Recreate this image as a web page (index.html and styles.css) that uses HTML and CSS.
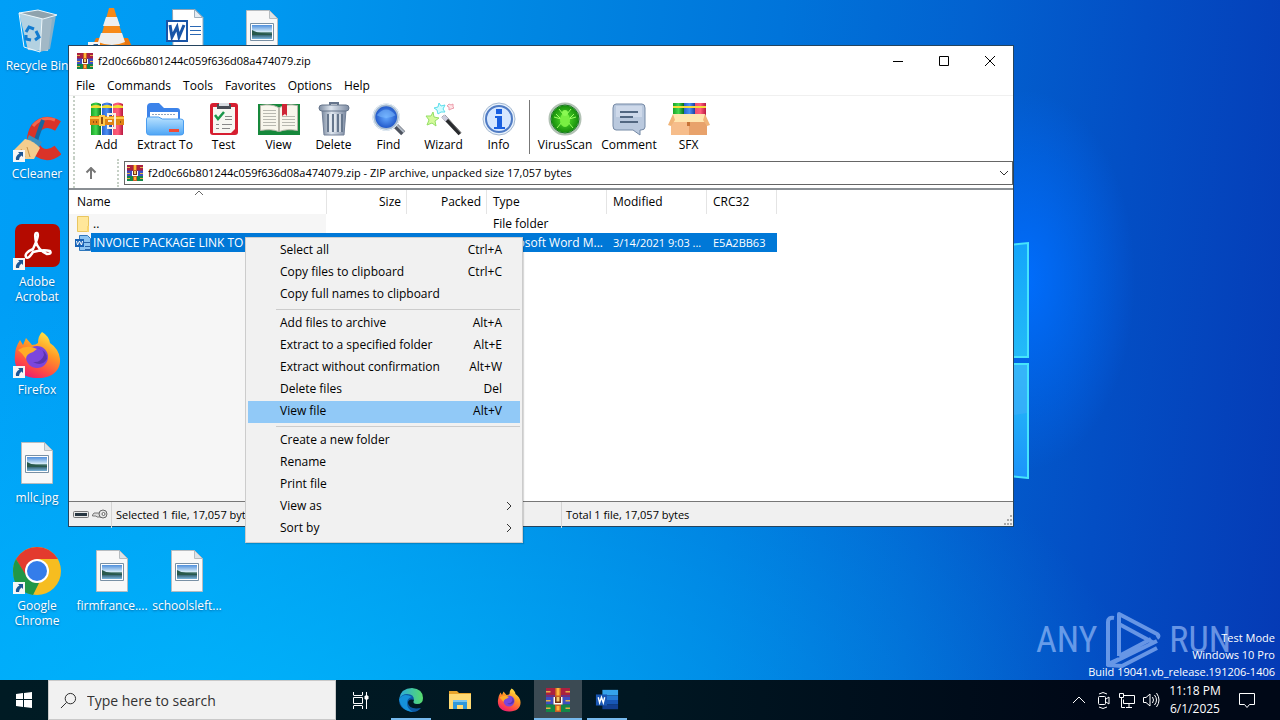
FILE: index.html
```html
<!DOCTYPE html>
<html lang="en">
<head>
<meta charset="utf-8">
<title>f2d0c66b801244c059f636d08a474079.zip</title>
<link rel="stylesheet" href="styles.css">
</head>
<body>
<svg class="defs" aria-hidden="true">
  <defs>
    <linearGradient id="gRed" x1="0" x2="1"><stop offset="0" stop-color="#f0506e"/><stop offset=".5" stop-color="#ff5c7c"/><stop offset="1" stop-color="#b81840"/></linearGradient>
    <linearGradient id="gBlue" x1="0" x2="1"><stop offset="0" stop-color="#2a62d0"/><stop offset=".5" stop-color="#4c90f4"/><stop offset="1" stop-color="#1a40a0"/></linearGradient>
    <linearGradient id="gGreen" x1="0" x2="1"><stop offset="0" stop-color="#18a428"/><stop offset=".5" stop-color="#44d850"/><stop offset="1" stop-color="#087018"/></linearGradient>
    <linearGradient id="gFolder" x1="0" y1="0" x2="0" y2="1"><stop offset="0" stop-color="#b9e2ff"/><stop offset="1" stop-color="#4fa6f5"/></linearGradient>
    <linearGradient id="gSteel" x1="0" x2="1"><stop offset="0" stop-color="#7c8ba0"/><stop offset=".4" stop-color="#dfe6ef"/><stop offset="1" stop-color="#7d8ba2"/></linearGradient>
    <linearGradient id="gSky" x1="0" y1="0" x2="0" y2="1"><stop offset="0" stop-color="#4f8fdc"/><stop offset=".5" stop-color="#d9edf8"/><stop offset=".55" stop-color="#3e6f63"/><stop offset=".75" stop-color="#3f6f80"/><stop offset="1" stop-color="#7ab4dd"/></linearGradient>
    <linearGradient id="gFox" x1=".8" y1="0" x2=".3" y2="1"><stop offset="0" stop-color="#fff04a"/><stop offset=".4" stop-color="#ff9a24"/><stop offset=".75" stop-color="#ff4b45"/><stop offset="1" stop-color="#ec1c70"/></linearGradient>
    <linearGradient id="gEdge" x1="0" y1="0" x2="1" y2="0"><stop offset="0" stop-color="#2aa8e0"/><stop offset="1" stop-color="#57dc6c"/></linearGradient>
    <linearGradient id="gPane" x1="0" y1="0" x2="0" y2="1"><stop offset="0" stop-color="#14a5fa"/><stop offset=".55" stop-color="#25bdf8"/><stop offset="1" stop-color="#1c93fa"/></linearGradient>
    <radialGradient id="gLens"><stop offset="0" stop-color="#66aaff"/><stop offset="1" stop-color="#1a50c4"/></radialGradient>
    <radialGradient id="gScan"><stop offset="0" stop-color="#58e82c"/><stop offset="1" stop-color="#108408"/></radialGradient>
  </defs>
  <symbol id="rar" viewBox="0 0 16 16">
    <path fill="#aa2040" d="M0 0h16v5H0z"/><path fill="#3d4ec0" d="M0 5h16v6H0z"/><path fill="#138648" d="M0 11h16v5H0z"/>
    <path fill="#742c80" d="M0 5h16v1H0z"/><path fill="#e5ad48" d="M0 2h3v1H0zM13 2h3v1h-3zM0 8h3v1H0zM13 8h3v1h-3zM0 13h3v1H0zM13 13h3v1h-3z"/>
    <path fill="#c95d24" d="M6 0h4v16H6z"/><path fill="#ffb53a" d="M7 0h2v5H7zM7 12h2v3H7z"/>
    <path fill="#743018" d="M5 6h6v5H5z"/><path fill="#fff" d="M5 6h1v4h4V6h1v5H5z"/><path fill="#f3c767" d="M7 6h2v3H7z"/>
  </symbol>
  <symbol id="books" viewBox="0 0 34 34">
    <path fill="url(#gGreen)" d="M1 2q5-3 10 0v31H1z"/><path fill="url(#gBlue)" d="M12 2q5-3 10 0v31H12z"/><path fill="url(#gRed)" d="M23 2q5-3 10 0v31H23z"/>
    <path fill="#f2dd33" d="M1 4q5-2 10 0v2H1zM12 4q5-2 10 0v2H12zM23 4q5-2 10 0v2H23z"/>
    <path fill="#df8415" d="M0 14h34v9H0z"/><path fill="#ffc94b" d="M0 15h34v2H0zM9 13h6v11H9z"/><path fill="#8d4e10" d="M3 19h1v2H3zM6 19h1v2H6zM11 15h2v7h-2zM30 19h1v2h-1z"/>
    <path fill="none" stroke="#f4eee2" stroke-width="2" d="M18 15v-3h7v14h-7v-3M18 19h4"/>
  </symbol>
  <symbol id="photo" viewBox="0 0 48 48">
    <path fill="#f8f8f8" stroke="#b7bcc0" d="M8.500 3.500H31L39.500 12v32.500h-31z"/><path fill="#dce3e8" stroke="#b7bcc0" d="M31.500 3.500v8h8z"/>
    <path fill="#fff" stroke="#7890a5" d="M12.500 16.500h23v17h-23z"/><path fill="url(#gSky)" d="M14 18h20v14H14z"/><path fill="#28594c" d="M14 23q5 3 9 3l11 1v1H14z"/>
  </symbol>
  <symbol id="shortcut" viewBox="0 0 12 12"><path fill="#f6f6f6" d="M0 0h12v12H0z"/><path fill="#1d5795" d="M5 2h5v5L8.500 5.500Q6 7 6 10H3q-1-4 3.500-6.500z"/></symbol>
  <symbol id="fox" viewBox="0 0 48 48">
    <path fill="url(#gFox)" d="M29 1q7 4 8 11 9 6 10 16c1 12-9 19-21 19C10 48 0 38 2 24q0-7 5-15l3 5 3-7 6 7q4 0 6-2 0-7 4-11z"/>
    <circle cx="24" cy="26" r="11" fill="#7b46dd"/><path fill="#ffac27" d="M5 19q9-6 19-1l-4 3q-7 2-7 7-4-6-8-9z"/><path fill="#5c34b0" d="M24 17q7 1 7 7-3 8-11 7 9 5 14-3 1-8-10-11z"/>
  </symbol>
  <symbol id="word" viewBox="0 0 26 24">
    <path fill="#35a3ec" d="M8 1h17v6H8z"/><path fill="#2478d4" d="M8 7h17v5H8z"/><path fill="#1857b6" d="M8 12h17v5H8z"/><path fill="#123f91" d="M8 17h17v5H8z"/><path fill="#1956b3" d="M1 6h12v12H1z"/>
    <path fill="none" stroke="#fff" stroke-width="1.500" d="M3.500 9l1.500 6 2-6 2 6 1.500-6"/>
  </symbol>
</svg>

<main class="desktop">
  <svg class="wall-panes" viewBox="0 0 20 240" aria-hidden="true">
    <path fill="url(#gPane)" stroke="#46e4fb" stroke-width="2" d="M-4 6L14 4v114H-4zM-4 125h18v114l-18-2z"/>
    <path fill="#46adfa" opacity=".5" d="M0 176l13-2V126H0z"/>
  </svg>

  <div class="icons">
    <button class="shortcut c1 r1"><svg viewBox="0 0 48 48"><path fill="#c7d6df" opacity=".9" d="M6 6l33 6-4 32-20-1z"/><path fill="#9fb4c1" opacity=".85" d="M43 8l-6 34-10 3 2-33z"/><path fill="#8fa3ae" d="M6 6l19-3 19 5-14 4z"/><path fill="none" stroke="#eef7fb" d="M6 6l19-3 19 5-14 4zM6 6l5 34 16 5 2-33"/><path fill="none" stroke="#117bd0" stroke-width="3" d="M13 25l3-5 5 2M23 24l3 6-4 3M18 33l-5-1v-4"/></svg><span>Recycle Bin</span></button>
    <button class="shortcut c2 r1" aria-label="VLC"><svg viewBox="0 0 48 48"><path fill="#e87611" d="M8 31h32l6 13H2z"/><path fill="#f78917" d="M21 1h5l11 36q-13 7-26 0z"/><path fill="#eee" d="M18 10h11l3 9H15zM13 26h21l3 9q-13 6-27 0z"/><use href="#shortcut" y="35" width="12" height="12"/></svg></button>
    <button class="shortcut c3 r1" aria-label="Document"><svg viewBox="0 0 48 48"><path fill="#fff" stroke="#8ea4b6" d="M9.500 2.500H32l8 8v35h-30z"/><path fill="#e5ebf2" stroke="#9eafbd" d="M31.500 2.500v8h8z"/><path stroke="#2b68b4" d="M27 19.500h11M27 23.500h11M27 27.500h11"/><path fill="#fff" stroke="#1955a7" stroke-width="2" d="M4 14h20v20H4z"/><path fill="none" stroke="#1955a7" stroke-width="3" d="M7 18l2 12 5-10 2 10 5-12"/></svg></button>
    <button class="shortcut c4 r1" aria-label="Picture"><svg><use href="#photo"/></svg></button>
    <button class="shortcut c1 r2"><svg viewBox="0 0 48 48"><path fill="none" stroke="#da3328" stroke-width="11" d="M45 11Q32 3 23 13q-8 14 3 24 9 6 19-2"/><path fill="none" stroke="#f2674d" stroke-width="3" d="M42 5Q29 0 20 11"/><path stroke="#19669e" stroke-width="4" d="M30 5l-7 20"/><path fill="#3d91be" d="M16 20l13 7-4 7-11-9z"/><path fill="#f3cd8e" d="M12 24q9 2 15 9l-6 11H9L1 35z"/><path stroke="#c99043" fill="none" d="M8 34l4 8M14 32l3 10"/><use href="#shortcut" y="35" width="12" height="12"/></svg><span>CCleaner</span></button>
    <button class="shortcut c1 r3"><svg viewBox="0 0 48 48"><rect x="2" y="1" width="45" height="43" rx="7" fill="#b40a00"/><path fill="none" stroke="#fff" stroke-width="2.500" d="M13 34q-2-4 7-8 7-15 4-16t-1 9q2 8 11 12 5 0 3-3-7-2-17 1-5 8-7 5z"/><use href="#shortcut" y="35" width="12" height="12"/></svg><span>Adobe Acrobat</span></button>
    <button class="shortcut c1 r4"><svg viewBox="0 0 48 48"><use href="#fox" width="48" height="48"/><use href="#shortcut" y="35" width="12" height="12"/></svg><span>Firefox</span></button>
    <button class="shortcut c1 r5"><svg><use href="#photo"/></svg><span>mllc.jpg</span></button>
    <button class="shortcut c1 r6"><svg viewBox="0 0 48 48"><circle cx="24" cy="24" r="24" fill="#f6bd20"/><path fill="#e33b2e" d="M3 12Q11 0 24 0t21 12H24l-11 18z"/><path fill="#219747" d="M3 12l11 18q4 6 12 6l-6 12Q0 44 0 24q0-7 3-12z"/><circle cx="24" cy="24" r="12" fill="#fff"/><circle cx="24" cy="24" r="10" fill="#347dea"/><use href="#shortcut" y="35" width="12" height="12"/></svg><span>Google Chrome</span></button>
    <button class="shortcut c2 r6"><svg><use href="#photo"/></svg><span>firmfrance....</span></button>
    <button class="shortcut c3 r6"><svg><use href="#photo"/></svg><span>schoolsleft...</span></button>
  </div>

  <div class="brand" aria-label="ANY RUN">
    <span>ANY</span>
    <svg viewBox="0 0 56 60" aria-hidden="true"><g fill="none" stroke="#a9c9ff" stroke-width="4" stroke-linejoin="round"><path d="M9 8q-6-1-6 4v42l11-5"/><path d="M14 46V4l38 20q3 2 0 4"/><path d="M14 14l35 19"/><path d="M52 31L3 55l14 1 35-18M14 46l32-17"/></g></svg>
    <span>RUN</span>
  </div>
  <p class="build">Test Mode<br>Windows 10 Pro<br>Build 19041.vb_release.191206-1406</p>

  <section class="window">
    <header class="titlebar">
      <svg class="mini"><use href="#rar"/></svg>
      <h1>f2d0c66b801244c059f636d08a474079.zip</h1>
      <div class="controls">
        <button aria-label="Minimize"><svg viewBox="0 0 12 12"><path d="M1 6.500h10"/></svg></button>
        <button aria-label="Maximize"><svg viewBox="0 0 12 12"><path d="M1.500 1.500h9v9h-9z"/></svg></button>
        <button aria-label="Close"><svg viewBox="0 0 12 12"><path d="M1 1l10 10M11 1L1 11"/></svg></button>
      </div>
    </header>
    <nav class="menubar"><button>File</button><button>Commands</button><button>Tools</button><button>Favorites</button><button>Options</button><button>Help</button></nav>
    <div class="toolbar">
      <button><svg viewBox="0 0 34 34"><use href="#books"/></svg>Add</button>
      <button class="mid"><svg class="wide" viewBox="0 0 38 34"><path fill="#3c83ea" d="M1 5q0-4 4-4h8l5 5h13q3 0 3 3v15H1z"/><path fill="#fff" d="M4 10h28v8H4z"/><path stroke="#92a6bf" stroke-dasharray="2 1" d="M6 12.500h24"/><path fill="url(#gFolder)" stroke="#4a9df0" d="M.5 17q0-2 2-2h10l4 2h18q3 0 3 2v12q0 2-3 2h-31q-3 0-3-3z"/><path fill="#ef4b36" d="M23 27h10v3H23z"/></svg>Extract To</button>
      <button><svg viewBox="0 0 34 34"><rect x="3" y="1" width="28" height="32" rx="3" fill="#d61e30"/><path fill="#f7f7f2" d="M6 5h22v22l-4 4H6z"/><path fill="#484c54" d="M10 2h14v5H10z"/><path fill="#d9dde2" d="M12 1h10v3H12z"/><path fill="none" stroke="#1a974a" stroke-width="2.500" d="M8 13l3 4 6-7"/><path stroke="#888" d="M18 14.500h7M18 17.500h7M15 22.500h10M15 26.500h8M9 22.500h3M9 26.500h3"/></svg>Test</button>
      <button><svg class="book" viewBox="0 0 44 34"><path fill="#16883b" d="M1 2h42v31H1z"/><path fill="#f8f6ec" stroke="#b7b5a9" d="M3.500 3.500q11-2 18 2v24q-7-3-18-1zM40.500 3.500q-11-2-18 2v24q7-3 18-1z"/><path stroke="#b8b8b0" d="M6 8.500h13M6 11.500h13M6 14.500h13M6 17.500h13M6 20.500h13M6 23.500h13M25 14.500h13M25 17.500h13M25 20.500h13M25 23.500h13"/><path fill="#ce2536" d="M25 2h5v12l-2-2-3 2z"/></svg>View</button>
      <button><svg viewBox="0 0 34 34"><path fill="url(#gSteel)" stroke="#728097" d="M5 8h24l-2 25H7z"/><path stroke="#66768c" stroke-width="2" d="M11 12v18M16 12v18M21 12v18M25 12v18"/><path stroke="#f7fafc" d="M13 12v18M18 12v18M23 12v18"/><rect x="2" y="3" width="30" height="6" rx="3" fill="url(#gSteel)" stroke="#65748a"/><path fill="none" stroke="#66758c" stroke-width="2" d="M13 3V1h8v2"/></svg>Delete</button>
      <button><svg viewBox="0 0 36 34"><path stroke="#4d535f" stroke-width="6" d="M24 23l9 9"/><path stroke="#b3bbc6" stroke-width="2" d="M25 22l9 9"/><circle cx="15" cy="15" r="13" fill="url(#gLens)" stroke="#a9bdd2" stroke-width="3"/><circle cx="15" cy="15" r="14" fill="none" stroke="#eef6fc"/><path fill="#82bfff" opacity=".5" d="M5 13q10-12 20 0-10 6-20 0z"/></svg>Find</button>
      <button><svg class="wide" viewBox="0 0 38 34"><path stroke="#292b2e" stroke-width="4" d="M18 14l17 18"/><path stroke="#777" d="M20 13l16 18"/><path stroke="#ccd" stroke-width="4" d="M18 14l4 4"/><path fill="#d4fa9c" stroke="#94df65" d="M8 10l1 5 5 1-4 3 1 5-4-3-5 2 2-5-3-4h5z"/><path fill="#d1fcff" stroke="#5bddeb" d="M14 1l2 3 4-1-2 4 2 3h-4l-3 2-1-4-3-2 4-1z"/><path fill="#ffe6e8" stroke="#ec9cab" d="M24 2l2 1 2-1v3l1 1-3 1-2 1v-3l-2-1z"/></svg>Wizard</button>
      <button><svg viewBox="0 0 34 34"><circle cx="17" cy="17" r="16" fill="#e8f1fb" stroke="#a5b9d1"/><circle cx="17" cy="17" r="13" fill="#d6e7ff" stroke="#4f7bc4" stroke-width="2"/><path fill="#195fe0" d="M13 14h7v11h3v2H12v-2h3v-9h-2zM14 7h6v5h-6z"/></svg>Info</button>
      <i class="rule"></i>
      <button class="long"><svg viewBox="0 0 34 34"><circle cx="17" cy="17" r="15" fill="url(#gScan)" stroke="#b2c2b4" stroke-width="3"/><circle cx="17" cy="17" r="14" fill="none" stroke="#137a1a"/><path fill="none" stroke="#a0ff68" d="M11 7l4 5M23 7l-4 5M6 15l7 2M28 15l-7 2M9 26l5-6M25 26l-5-6M13 17l-5-5M21 17l5-5"/><ellipse cx="17" cy="18" rx="5" ry="7" fill="#79ef42"/><circle cx="17" cy="11" r="3" fill="#8af952"/></svg>VirusScan</button>
      <button class="long"><svg viewBox="0 0 34 34"><path fill="#bac9de" stroke="#7589a5" d="M4 2h26q3 0 3 4v19q0 3-4 3h-1v5l-7-5H4q-3 0-3-4V6q0-4 3-4z"/><path fill="#dce5f2" d="M4 4h26v11H4z" opacity=".6"/><path stroke="#526781" stroke-width="2" d="M8 10h18M8 15h13M8 20h18"/></svg>Comment</button>
      <button><svg class="book" viewBox="0 0 44 34"><path fill="url(#gGreen)" d="M6 1h11v14H6z"/><path fill="url(#gBlue)" d="M17 1h11v14H17z"/><path fill="url(#gRed)" d="M28 1h11v14H28z"/><path fill="#f7dc39" d="M6 4h11v2H6zM17 4h11v2H17zM28 4h11v2H28z"/><path fill="#e8a26b" d="M4 18h36v15H4z"/><path fill="#f6bd8b" d="M4 18h18v15H4z"/><path fill="#ffe6b0" d="M6 12h32l2 8H4z"/><path fill="#f0b478" d="M6 12L1 23l3 1 4-6zM38 12l5 11-3 1-4-6z"/><path fill="#c77438" d="M20 20h3v4h-3z"/></svg>SFX</button>
    </div>
    <div class="address">
      <button class="up" aria-label="Up one level"><svg viewBox="0 0 12 12"><path d="M6 12V1M1.500 5.500L6 1l4.500 4.500"/></svg></button>
      <div class="path">
        <svg class="mini"><use href="#rar"/></svg>
        <input aria-label="Path" value="f2d0c66b801244c059f636d08a474079.zip - ZIP archive, unpacked size 17,057 bytes">
        <button aria-label="Show paths"><svg viewBox="0 0 12 12"><path d="M2 4l4 4 4-4"/></svg></button>
      </div>
    </div>
    <div class="list">
      <table>
        <colgroup><col class="w-name"><col class="w-num"><col class="w-num"><col class="w-type"><col class="w-date"><col class="w-crc"></colgroup>
        <thead><tr><th>Name<svg class="sort" viewBox="0 0 10 6"><path d="M1 5l4-4 4 4"/></svg></th><th class="num">Size</th><th class="num">Packed</th><th>Type</th><th>Modified</th><th>CRC32</th></tr></thead>
        <tbody>
          <tr><td class="file"><div><svg class="mini" viewBox="0 0 16 16"><path fill="#ffe79a" stroke="#e9c660" d="M2.500.5h11v15h-11z"/><path fill="#f9d56e" d="M12 10h2v6h-2z"/></svg><span>..</span></div></td><td></td><td></td><td>File folder</td><td></td><td></td></tr>
          <tr class="selected"><td class="file"><div><svg class="mini" viewBox="0 0 16 16"><path fill="#8cc4f2" stroke="#2e77bc" d="M4.500.5h8l3 3v12h-11z"/><path stroke="#2763a9" d="M9 7.500h6M10 11.500h5M10 14.500h5"/><path fill="#1762b6" d="M0 4h9v8H0z"/><path fill="none" stroke="#fff" d="M1.500 6l1 4 2-4 2 4 1-4"/></svg><span>INVOICE PACKAGE LINK TO D</span></div></td><td></td><td></td><td>Microsoft Word M...</td><td class="data">3/14/2021 9:03 ...</td><td class="data">E5A2BB63</td></tr>
        </tbody>
      </table>
    </div>
    <footer class="status">
      <div class="locks"><svg viewBox="0 0 16 12"><rect x=".5" y="2.500" width="15" height="6" rx="1" fill="#e8e8e8" stroke="#777"/><path fill="#263641" d="M2 4h12v3H2z"/></svg><svg viewBox="0 0 16 12"><path fill="#ddd" stroke="#777" d="M8 4H2L.5 6v1H4l1 1h5"/><circle cx="11" cy="5" r="4" fill="#e6e6e6" stroke="#666"/><circle cx="11.500" cy="5" r="1.500" fill="#fff" stroke="#666"/></svg></div>
      <span>Selected 1 file, 17,057 bytes</span><span>Total 1 file, 17,057 bytes</span>
      <svg class="grip" viewBox="0 0 10 10"><path fill="#a8a8a8" d="M8 0h2v2H8zM5 4h2v2H5zM8 4h2v2H8zM2 8h2v2H2zM5 8h2v2H5zM8 8h2v2H8z"/></svg>
    </footer>
  </section>

  <div class="context" role="menu">
    <button role="menuitem">Select all<span>Ctrl+A</span></button>
    <button role="menuitem">Copy files to clipboard<span>Ctrl+C</span></button>
    <button role="menuitem">Copy full names to clipboard</button>
    <hr>
    <button role="menuitem">Add files to archive<span>Alt+A</span></button>
    <button role="menuitem">Extract to a specified folder<span>Alt+E</span></button>
    <button role="menuitem">Extract without confirmation<span>Alt+W</span></button>
    <button role="menuitem">Delete files<span>Del</span></button>
    <button role="menuitem" class="active">View file<span>Alt+V</span></button>
    <hr>
    <button role="menuitem">Create a new folder</button>
    <button role="menuitem">Rename</button>
    <button role="menuitem">Print file</button>
    <button role="menuitem" class="sub">View as<svg viewBox="0 0 6 10"><path d="M1 1l4 4-4 4"/></svg></button>
    <button role="menuitem" class="sub">Sort by<svg viewBox="0 0 6 10"><path d="M1 1l4 4-4 4"/></svg></button>
  </div>
</main>

<footer class="taskbar">
  <button class="start" aria-label="Start"><svg viewBox="0 0 16 16"><path fill="#fff" d="M0 2l7-1v6H0zM8 1l8-1v7H8zM0 8h7v7l-7-1zM8 8h8v8l-8-1z"/></svg></button>
  <label class="search"><svg viewBox="0 0 18 18"><circle cx="11" cy="7" r="5.500"/><path d="M7 11l-6 6"/></svg><input type="text" placeholder="Type here to search" aria-label="Search"></label>
  <button class="view" aria-label="Task view"><svg class="line" viewBox="0 0 18 18"><path d="M2.500 1v3M11.500 1v3M2.500 4.500h9M2.500 6.500h9v6h-9zM2.500 14.500h9M2.500 15v3M11.500 15v3M15.500 1v17"/><path fill="#fff" d="M14 5h3v3h-3z"/></svg></button>
  <div class="apps">
    <button class="open" aria-label="Edge"><svg viewBox="0 0 24 24"><path fill="#0c59a4" d="M0 12q2-7 9-7 7 1 7 7-7-2-7 3 1 7 13 5-5 6-13 3Q0 20 0 12z"/><path fill="url(#gEdge)" d="M0 11Q2 0 13 0q11 1 11 10 0 6-6 6-5 0-3-4 0-6-7-6-5 0-8 5z"/><path fill="#1591da" d="M0 11q2 12 14 13-6-3-6-9 0-5 5-6-8-5-13 2z"/></svg></button>
    <button aria-label="File Explorer"><svg viewBox="0 0 24 24"><path fill="#e8a52b" d="M1 3h8l2 2h12v3H1z"/><path fill="#ffda73" d="M1 6h22v15H1z"/><path fill="#2f98da" d="M5 12h14v9h-4v-4H9v4H5z"/><path fill="#78c4ef" d="M5 12h14v2H5z"/></svg></button>
    <button aria-label="Firefox"><svg><use href="#fox"/></svg></button>
    <button class="open current" aria-label="WinRAR"><svg><use href="#rar"/></svg></button>
    <button class="open" aria-label="Word"><svg><use href="#word"/></svg></button>
  </div>
  <div class="tray">
    <button aria-label="Hidden icons"><svg class="line" viewBox="0 0 18 18"><path d="M3 12l6-6 6 6"/></svg></button>
    <button aria-label="Meet now"><svg class="line" viewBox="0 0 18 18"><rect x="4.500" y="5.500" width="7" height="8" rx="1"/><path d="M12 8l3-2v7l-3-2M5 3q4-3 8 0M5 16q4 3 8 0"/></svg></button>
    <button aria-label="Network"><svg class="line" viewBox="0 0 18 18"><path d="M6 4.500h10.500v8H5.500v-4M8 16.500h6M11 13v3M1.500 2.500h4v4h-4zM3.500 7v9.500H7"/></svg></button>
    <button aria-label="Volume"><svg class="line" viewBox="0 0 18 18"><path d="M1.500 6.500H4L8 3v12l-4-3.500H1.500zM10.500 6q2 3 0 6M12.500 4q4 5 0 10M14.500 2q5 7 0 14"/></svg></button>
  </div>
  <button class="clock"><time>11:18 PM<br>6/1/2025</time></button>
  <button class="notice" aria-label="Notifications"><svg class="line" viewBox="0 0 18 18"><path d="M1.500 2.500h15v11h-5l-2.500 3-2.500-3h-5z"/></svg></button>
</footer>
</body>
</html>
```

FILE: styles.css
```css
* { box-sizing: border-box; }
html, body { height: 100%; margin: 0; }
body {
  display: grid;
  grid-template-rows: minmax(0, 1fr) 40px;
  overflow: hidden;
  font: 12px/14px "Open Sans", "Noto Sans", sans-serif;
  color: #000;
}
button, input { font: inherit; color: inherit; border: 0; background: none; padding: 0; margin: 0; }
svg { display: block; flex: none; }
.defs { position: absolute; width: 0; height: 0; }
.mini { width: 16px; height: 16px; }

/* Desktop */
.desktop {
  position: relative;
  background:
    radial-gradient(ellipse 110px 190px at 1025px 280px, rgba(0, 110, 255, .95), rgba(0, 100, 250, 0)),
    radial-gradient(ellipse 900px 480px at 20% 112%, rgba(0, 188, 255, .8), rgba(0, 170, 255, 0)),
    linear-gradient(96deg, #009ff7 0%, #0098f0 20%, #0086e2 40%, #0074da 58%, #0262d0 72%, #034ec4 85%, #053ab5 100%);
}
.wall-panes { position: absolute; left: 1014px; top: 239px; width: 20px; height: 240px; }
.icons {
  display: grid;
  grid-template-columns: repeat(4, 75px);
  grid-template-rows: repeat(6, 108px);
}
.shortcut {
  display: flex;
  flex-direction: column;
  align-items: center;
  gap: 3px;
  padding: 7px 2px 0 1px;
  color: #fff;
  line-height: 15px;
  text-align: center;
  text-shadow: 0 1px 2px rgba(0, 40, 90, .5);
}
.shortcut svg { width: 48px; height: 48px; }
.c1 { grid-column: 1; } .c2 { grid-column: 2; } .c3 { grid-column: 3; } .c4 { grid-column: 4; }
.r1 { grid-row: 1; } .r2 { grid-row: 2; } .r3 { grid-row: 3; } .r4 { grid-row: 4; } .r5 { grid-row: 5; } .r6 { grid-row: 6; }

.brand {
  position: absolute;
  right: 49px;
  bottom: 10px;
  display: flex;
  align-items: center;
  gap: 8px;
  opacity: .6;
  color: #a9c9ff;
  font: 36px/60px "Liberation Sans Narrow", "Roboto Condensed", "Liberation Sans", sans-serif;
}
.brand svg { width: 56px; height: 60px; }
.build { position: absolute; right: 5px; bottom: 0; margin: 0; color: #fff; font-size: 11px; line-height: 17px; text-align: right; }

/* Archive window */
.window {
  position: absolute;
  left: 68px;
  right: 266px;
  top: 45px;
  bottom: 153px;
  display: flex;
  flex-direction: column;
  border: 1px solid #24445f;
  background: #fff;
}
.titlebar { display: flex; align-items: center; gap: 5px; height: 30px; padding-left: 8px; }
.titlebar h1 { margin: 0; font-size: 11px; font-weight: 400; }
.controls { display: flex; margin-left: auto; }
.controls button { display: grid; place-items: center; width: 46px; height: 28px; }
.controls svg { width: 12px; height: 12px; fill: none; stroke: #000; }
.menubar { display: flex; gap: 12px; height: 20px; padding-left: 7px; border-bottom: 1px solid #f0f0f0; }
.toolbar { display: flex; height: 62px; margin-left: 4px; padding: 6px 0 0 4px; border-left: 2px dotted #c6d0c6; }
.toolbar button { display: flex; flex-direction: column; align-items: center; gap: 2px; width: 55px; white-space: nowrap; }
.toolbar .mid { width: 62px; }
.toolbar .long { width: 64px; }
.toolbar svg { width: 34px; height: 34px; }
.toolbar .wide { width: 38px; }
.toolbar .book { width: 44px; }
.rule { flex: none; width: 1px; height: 54px; margin: -2px 3px 0; background: #777; }
.address { display: flex; align-items: center; height: 30px; margin-left: 4px; border-left: 2px dotted #c6d0c6; }
.up { display: flex; align-items: center; width: 44px; height: 28px; padding-left: 10px; border-right: 2px dotted #c6d0c6; }
.up svg { width: 12px; height: 12px; fill: none; stroke: #777; stroke-width: 2; }
.path { display: flex; flex: 1; align-items: center; gap: 5px; height: 24px; margin-left: 5px; padding: 0 2px; border: 1px solid #666; }
.path input { flex: 1; min-width: 0; font-size: 11px; }
.path button svg { width: 12px; height: 12px; fill: none; stroke: #333; }
.list { flex: 1; min-height: 0; overflow: hidden; border-top: 2px solid #8a8f94; border-bottom: 1px solid #777; background: linear-gradient(#f6f6f6, #f6f6f6) 0 24px / 257px 100% no-repeat; }
table { width: 708px; table-layout: fixed; border-collapse: separate; border-spacing: 0; }
.w-name { width: 258px; } .w-num { width: 80px; } .w-type { width: 120px; } .w-date { width: 100px; } .w-crc { width: 70px; }
th, td { padding: 0 6px; font-weight: 400; text-align: left; white-space: nowrap; overflow: hidden; }
th { position: relative; height: 24px; padding-left: 8px; border-right: 1px solid #e4e4e4; background: #fff; }
th + th { padding-left: 6px; }
th.num { text-align: right; padding-right: 5px; }
td { height: 19px; }
.data { padding-right: 0; font-size: 11px; }
.sort { position: absolute; left: 125px; top: 0; width: 10px; height: 6px; fill: none; stroke: #666; }
td.file { padding: 0 0 0 6px; }
.file div { display: flex; align-items: center; height: 19px; }
.file span { flex: 1; padding-left: 2px; line-height: 19px; }
.selected td { color: #fff; background: #0078d7; }
.selected .file { background: #f6f6f6; }
.selected .file span { background: #0078d7; }
.status { position: relative; display: grid; grid-template-columns: 42px 450px 1fr; height: 24px; background: #f0f0f0; font-size: 11px; line-height: 26px; }
.status span { padding-left: 4px; border-left: 1px solid #d4d4d4; }
.locks { display: flex; align-items: center; gap: 3px; padding-left: 4px; }
.locks svg { width: 16px; height: 12px; }
.grip { position: absolute; right: 1px; bottom: 1px; width: 10px; height: 10px; }

/* Context menu */
.context { position: absolute; left: 245px; top: 237px; width: 278px; padding: 2px; border: 1px solid #ccc; background: #f1f1f1; box-shadow: 1px 1px 1px rgba(0, 0, 0, .15); }
.context button { display: flex; align-items: center; justify-content: space-between; width: 100%; height: 22px; padding: 0 18px 2px 32px; text-align: left; }
.context .sub { padding-right: 8px; }
.context svg { width: 6px; height: 10px; fill: none; stroke: #333; }
.context hr { margin: 3px 0 3px 28px; border: 0; border-top: 1px solid #ccc; }
.context .active { background: #91c9f7; }

/* Taskbar */
.taskbar { display: flex; align-items: stretch; color: #fff; background: linear-gradient(90deg, #001b24, #001722 50%, #000817 85%); }
.taskbar button { display: grid; place-items: center; }
.line { fill: none; stroke: #fff; }
.start { width: 48px; }
.start svg { width: 16px; height: 16px; }
.search { display: flex; align-items: center; gap: 10px; width: 288px; padding-left: 11px; border: 1px solid #c9c9c9; background: #f1f1f1; color: #333; }
.search svg { width: 17px; height: 17px; fill: none; stroke: #222; }
.search input { flex: 1; min-width: 0; font-size: 14px; }
.search input::placeholder { color: #333; opacity: 1; }
.view { width: 48px; }
.view svg, .tray svg, .notice svg { width: 18px; height: 18px; }
.apps { display: flex; gap: 1px; margin-left: 3px; }
.apps button { position: relative; width: 48px; }
.apps svg { width: 24px; height: 24px; }
.apps .open::after { content: ""; position: absolute; left: 4px; right: 4px; bottom: 0; height: 2px; background: #76b9ed; }
.apps .current { background: #3b4a53; }
.apps .current::after { left: 0; right: 0; }
.tray { display: flex; margin-left: auto; }
.tray button { width: 24px; }
.taskbar .clock { width: 64px; line-height: 18px; text-align: center; }
.notice { width: 40px; margin-right: 8px; }
.taskbar .notice { margin-right: 13px; }
```
